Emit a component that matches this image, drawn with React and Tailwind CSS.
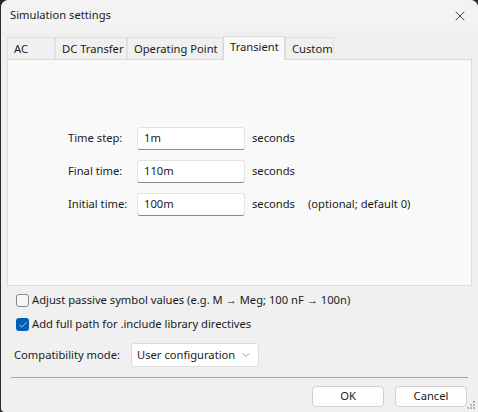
import { ChevronDown, X, Check } from 'lucide-react';

const font = { fontFamily: '"Noto Sans", "Liberation Sans", sans-serif' };

function Field({ label, value, note }) {
  return (
    <div className="flex items-center h-[23px]">
      <span className="w-[69px]">{label}</span>
      <div className="w-[108px] h-[23px] bg-white border border-[#e3e3e3] border-b-[#8a8a8a] rounded-[3px] flex items-center pl-[6px]">
        {value}
      </div>
      <span className="ml-[7px]">seconds</span>
      {note && <span className="ml-[13px]">{note}</span>}
    </div>
  );
}

export default function App() {
  const tabs = [
    { name: 'AC', w: 'w-[48px]' },
    { name: 'DC Transfer', w: 'w-[72px]' },
    { name: 'Operating Point', w: 'w-[96px]' },
    { name: 'Transient', w: 'w-[62px]', active: true },
    { name: 'Custom', w: 'w-[49px]' },
  ];

  return (
    <div className="w-[478px] h-[412px] bg-[#2b2b2b] flex pl-px text-[#1a1a1a] text-[11.2px] whitespace-nowrap" style={font}>
      <div className="flex-1 bg-[#f0f0f0] rounded-t-[8px] rounded-bl-[4px] flex flex-col relative">
        {/* title bar */}
        <div className="h-[31px] flex items-center justify-between pl-[9px] pr-[10px] bg-[#f3f3f3] rounded-t-[8px]">
          <span>Simulation settings</span>
          <X size={16} strokeWidth={1.3} className="text-[#222]" />
        </div>

        {/* tabs */}
        <div className="flex items-end h-[28px] pl-[6px]">
          {tabs.map(t => (
            <div
              key={t.name}
              className={`${t.w} flex items-center pl-[6px] border-t border-l border-r ${
                t.active
                  ? 'h-[24px] bg-[#f9f9f9] border-[#d9d9d9] -mb-px relative z-10 pb-[2px]'
                  : 'h-[22px] bg-[#f0f0f0] border-[#e0e0e0] pt-px'
              }`}
            >
              {t.name}
            </div>
          ))}
        </div>

        {/* panel */}
        <div className="mx-[6px] h-[227px] bg-[#f9f9f9] border border-[#dcdcdc] pl-[60px] pt-[67px] flex flex-col gap-[10px]">
          <Field label="Time step:" value="1m" />
          <Field label="Final time:" value="110m" />
          <Field label="Initial time:" value="100m" note="(optional; default 0)" />
        </div>

        {/* options */}
        <div className="pl-[15px] pt-[8px] flex flex-col gap-[11px]">
          <div className="flex items-center h-[13px]">
            <div className="w-[13px] h-[13px] rounded-[3px] border border-[#8a8a8a] bg-[#f6f6f6]" />
            <span className="ml-[3px]">Adjust passive symbol values (e.g. M → Meg; 100 nF → 100n)</span>
          </div>
          <div className="flex items-center h-[13px]">
            <div className="w-[13px] h-[13px] rounded-[3px] bg-[#005fb8] flex items-center justify-center">
              <Check size={10} strokeWidth={1.6} className="text-white" />
            </div>
            <span className="ml-[3px]">Add full path for .include library directives</span>
          </div>
        </div>

        <div className="flex items-center pl-[13px] mt-[12px]">
          <span className="w-[117px]">Compatibility mode:</span>
          <div className="w-[128px] h-[24px] bg-white border border-[#dcdcdc] rounded-[3px] flex items-center justify-between pl-[5px] pr-[6px]">
            User configuration
            <ChevronDown size={12} strokeWidth={1.2} className="text-[#555]" />
          </div>
        </div>

        <div className="mx-[10px] mt-[10px] h-px bg-[#a8a8a8]" />

        <div className="flex justify-end gap-[11px] pr-[11px] mt-[8px]">
          <div className="w-[72px] h-[21px] bg-[#fdfdfd] border border-[#d0d0d0] rounded-[4px] flex items-center justify-center">OK</div>
          <div className="w-[72px] h-[21px] bg-[#fdfdfd] border border-[#d0d0d0] rounded-[4px] flex items-center justify-center">Cancel</div>
        </div>

        {/* resize grip */}
        <div className="absolute right-[3px] bottom-[3px] grid grid-cols-3 gap-[1px]">
          {[0, 0, 1, 0, 1, 1, 1, 1, 1].map((v, i) => (
            <div key={i} className={`w-[2px] h-[2px] ${v ? 'bg-[#b5b5b5]' : 'bg-transparent'}`} />
          ))}
        </div>
      </div>
    </div>
  );
}
